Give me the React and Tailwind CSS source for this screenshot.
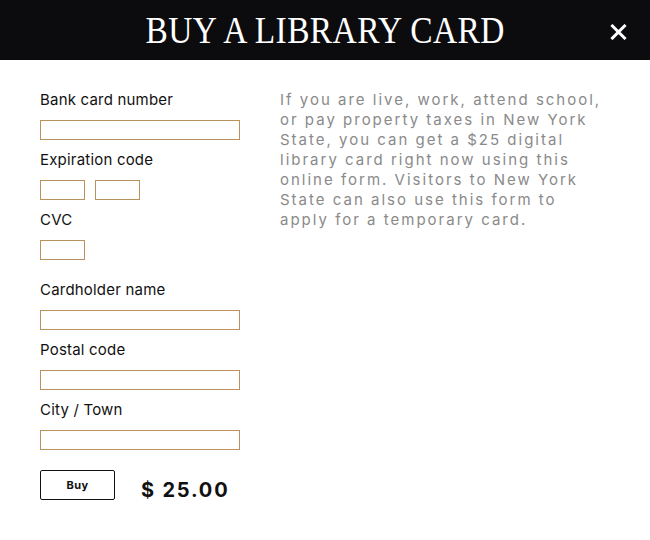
import React from "react";

function Field({ label, width = "w-[200px]" }) {
  return (
    <div>
      <label className="block h-5 leading-5 text-[15px] tracking-[0.2px] text-[#111]">{label}</label>
      <input
        type="text"
        className={`mt-2.5 block h-5 ${width} border border-[#b8925a] bg-white outline-none`}
      />
    </div>
  );
}

export default function App() {
  const inter = { fontFamily: "Inter, 'Noto Sans', sans-serif" };
  return (
    <div style={inter} className="w-[650px] h-[540px] bg-white">
      <div className="relative h-[60px] bg-[#0c0c0e] flex items-center justify-center">
        <h1
          style={{ fontFamily: "'Liberation Serif', serif" }}
          className="text-white text-[38px] font-normal tracking-[0.5px] leading-none [transform:scaleX(0.88)]"
        >
          BUY A LIBRARY CARD
        </h1>
        <button className="absolute right-[24px] top-[24px] w-4 h-4">
          <svg viewBox="0 0 16 16" width="17" height="16">
            <path d="M2 2 L14 14 M14 2 L2 14" stroke="white" strokeWidth="3" strokeLinecap="square" />
          </svg>
        </button>
      </div>

      <div className="flex gap-10 pl-10 pt-[30px]">
        <div className="w-[200px] flex flex-col">
          <div className="flex flex-col gap-2.5">
            <Field label="Bank card number" />
            <div>
              <label className="block h-5 leading-5 text-[15px] tracking-[0.2px] text-[#111]">Expiration code</label>
              <div className="mt-2.5 flex gap-2.5">
                <input type="text" className="block h-5 w-[45px] border border-[#b8925a] outline-none" />
                <input type="text" className="block h-5 w-[45px] border border-[#b8925a] outline-none" />
              </div>
            </div>
            <Field label="CVC" width="w-[45px]" />
          </div>
          <div className="mt-5 flex flex-col gap-2.5">
            <Field label="Cardholder name" />
            <Field label="Postal code" />
            <Field label="City / Town" />
          </div>
          <div className="mt-5 flex items-start gap-[26px]">
            <button className="w-[75px] h-[30px] border border-[#111] rounded-[2px] text-[11px] font-bold tracking-[0.5px] text-[#111]">
              Buy
            </button>
            <span className="text-[20px] leading-6 font-bold tracking-[1.8px] text-[#111] mt-2">$ 25.00</span>
          </div>
        </div>
        <p className="w-[330px] text-[15px] leading-5 tracking-[2px] text-[#8a8a8a]">
          If you are live, work, attend school, or pay property taxes in New York State, you can get a $25 digital
          library card right now using this online form. Visitors to New York State can also use this form to apply
          for a temporary card.
        </p>
      </div>
    </div>
  );
}
